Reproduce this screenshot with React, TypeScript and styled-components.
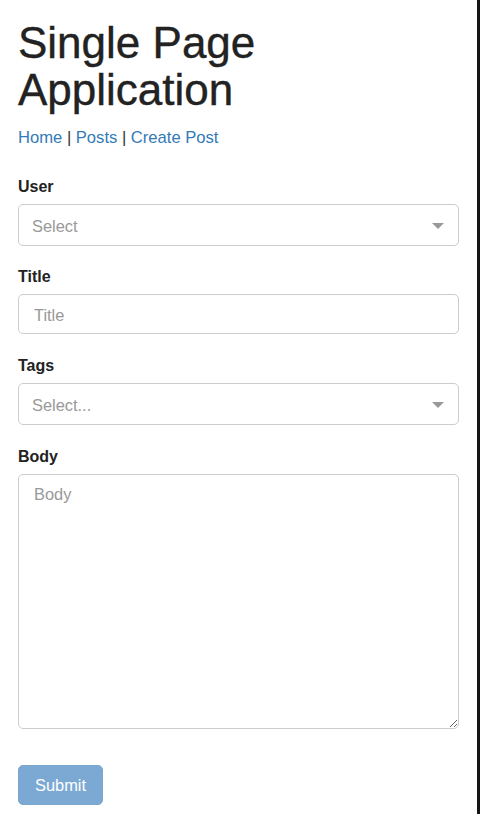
import styled, { createGlobalStyle } from 'styled-components';

const GlobalStyle = createGlobalStyle`
  html, body {
    margin: 0;
    padding: 0;
    background: #fff;
  }
  body {
    font-family: "Liberation Sans", Arial, Helvetica, sans-serif;
    font-size: 16px;
    color: #333;
  }
  * { box-sizing: border-box; }
`;

const Page = styled.div`
  min-height: 814px;
  padding: 19px 18px 0 18px;
  border-right: 3px solid #141414;
  overflow: hidden;
`;

const Heading = styled.h1`
  margin: 0 0 13px;
  font-size: 44px;
  line-height: 47px;
  font-weight: 400;
  color: #222;
  -webkit-text-stroke: 0.4px #222;
`;

const Nav = styled.nav`
  font-size: 16.6px;
  line-height: 23px;
  color: #333;
  margin-bottom: 26px;
`;

const NavLink = styled.a`
  color: #337ab7;
  text-decoration: none;
`;

const Group = styled.div<{ $gap?: number }>`
  margin-bottom: ${({ $gap }) => $gap ?? 19}px;
`;

const Label = styled.label`
  display: block;
  font-size: 16px;
  line-height: 23px;
  font-weight: 700;
  color: #222;
  margin-bottom: 6px;
`;

const SelectBox = styled.div`
  display: flex;
  align-items: center;
  justify-content: space-between;
  height: 42px;
  padding: 2px 14px 0 13px;
  border: 1px solid #ccc;
  border-radius: 5px;
  background: #fff;
`;

const Placeholder = styled.span`
  color: #999;
  font-size: 16.4px;
`;

const Caret = styled.span`
  width: 0;
  height: 0;
  border-style: solid;
  border-width: 6px 6px 0;
  border-color: #999 transparent transparent;
`;

const Input = styled.input`
  display: block;
  width: 100%;
  height: 40px;
  padding: 2px 15px 0;
  border: 1px solid #ccc;
  border-radius: 5px;
  font-family: inherit;
  font-size: 16.4px;
  color: #555;
  outline: none;

  &::placeholder { color: #999; }
`;

const TextArea = styled.textarea`
  display: block;
  width: 100%;
  height: 255px;
  padding: 8px 15px;
  border: 1px solid #ccc;
  border-radius: 5px;
  font-family: inherit;
  font-size: 16.4px;
  line-height: 23px;
  color: #555;
  resize: vertical;
  outline: none;

  &::placeholder { color: #999; }
`;

const Button = styled.button`
  width: 85px;
  height: 40px;
  border: 1px solid #7aa5cd;
  border-radius: 5px;
  background: #7ca9d3;
  color: #fff;
  font-family: inherit;
  font-size: 16.4px;
  cursor: not-allowed;
`;

const App = () => (
  <>
    <GlobalStyle />
    <Page>
      <Heading>
        Single Page
        <br />
        Application
      </Heading>
      <Nav>
        <NavLink href="#">Home</NavLink> | <NavLink href="#">Posts</NavLink> |{' '}
        <NavLink href="#">Create Post</NavLink>
      </Nav>
      <form onSubmit={e => e.preventDefault()}>
        <Group>
          <Label>User</Label>
          <SelectBox>
            <Placeholder>Select</Placeholder>
            <Caret />
          </SelectBox>
        </Group>
        <Group $gap={20}>
          <Label>Title</Label>
          <Input placeholder="Title" />
        </Group>
        <Group $gap={20}>
          <Label>Tags</Label>
          <SelectBox>
            <Placeholder>Select...</Placeholder>
            <Caret />
          </SelectBox>
        </Group>
        <Group $gap={36}>
          <Label>Body</Label>
          <TextArea placeholder="Body" />
        </Group>
        <Button type="submit" disabled>
          Submit
        </Button>
      </form>
    </Page>
  </>
);

export default App;
